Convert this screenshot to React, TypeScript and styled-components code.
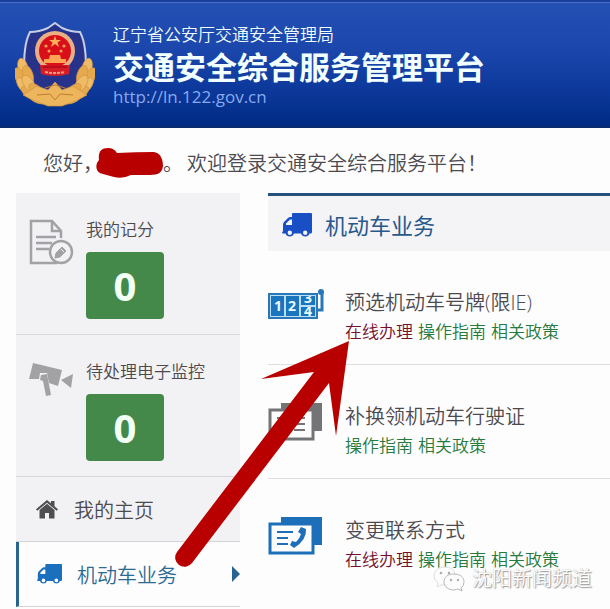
import React from "react";
import styled, { createGlobalStyle } from "styled-components";

const cjk = '"Noto Sans CJK SC", sans-serif';

const GlobalStyle = createGlobalStyle`
  *, *::before, *::after { box-sizing: border-box; }
  body {
    margin: 0;
    background: #fdfdfe;
    color: #4c4a4e;
    font-family: "Open Sans", ${cjk};
    font-size: 20px;
    font-weight: 350;
  }
  a { color: inherit; text-decoration: none; }
  h1, h2, h3, p, ul { margin: 0; padding: 0; font-weight: inherit; }
  ul { list-style: none; }
  svg { display: block; flex: none; }
`;

const Page = styled.div`
  position: relative;
  overflow: hidden;
`;

const Header = styled.header`
  display: flex;
  align-items: center;
  gap: 18px;
  height: 128px;
  padding: 0 15px;
  border-top: 2px solid #1a3f9f;
  background: linear-gradient(#2450b4 0%, #1c47ac 35%, #0d389b 70%, #002c84 97%, #0b2c6c 100%);
  box-shadow: inset 0 1px #4a70c4;
`;

const Brand = styled.div`
  display: flex;
  flex-direction: column;
  color: #f2ffff;
  white-space: nowrap;
`;

const Bureau = styled.p`
  font-size: 17px;
  line-height: 24px;
`;

const Title = styled.h1`
  font-size: 31px;
  line-height: 40px;
  font-weight: 700;
`;

const SiteLink = styled.a`
  color: #86aaf0;
  font-family: "Open Sans", sans-serif;
  font-size: 17px;
  font-weight: 400;
  line-height: 20px;
`;

const Greeting = styled.p`
  display: flex;
  align-items: center;
  height: 65px;
  padding: 6px 0 0 43px;
  line-height: 30px;
  white-space: nowrap;
`;

const Redaction = styled.svg`
  margin: 0 0 0 -7px;
`;

const Welcome = styled.span`
  margin-left: 4px;
`;

const Columns = styled.div`
  display: flex;
  align-items: flex-start;
  gap: 28px;
  padding-left: 16px;
`;

const Sidebar = styled.aside`
  flex: 0 0 224px;
  background: #f2f1f4;
`;

const Stat = styled.section`
  display: flex;
  gap: 12px;
  height: 142px;
  padding: 24px 14px 0 12px;
  border-bottom: 1px solid #d8d7da;
`;

const StatIcon = styled.div`
  padding-top: 2px;
`;

const StatLabel = styled.h2`
  font-size: 17px;
  line-height: 25px;
`;

const StatValue = styled.div`
  display: flex;
  align-items: center;
  justify-content: center;
  width: 78px;
  height: 67px;
  margin-top: 10px;
  border-radius: 4px;
  background: #45894a;
  color: #f2fff4;
  font-size: 40px;
  font-weight: 700;
`;

const NavItem = styled.a<{ $active?: boolean }>`
  display: flex;
  align-items: center;
  gap: ${(p) => (p.$active ? 15 : 16)}px;
  height: 65px;
  padding-left: ${(p) => (p.$active ? 18 : 20)}px;
  border-bottom: 1px solid #d3d3d6;
  border-left: ${(p) => (p.$active ? "3px solid #28648f" : "0")};
  background: ${(p) => (p.$active ? "#fdfdfe" : "transparent")};
  color: ${(p) => (p.$active ? "#2c6a90" : "#4c4a4e")};
`;

const NavLabel = styled.span`
  padding-top: 4px;
  line-height: 30px;
`;

const NavCaret = styled.svg`
  margin-left: auto;
`;

const Main = styled.main`
  flex: 1;
  min-width: 0;
`;

const PanelHead = styled.header`
  display: flex;
  align-items: center;
  gap: 13px;
  height: 58px;
  padding: 2px 14px 0;
  border-top: 3px solid #28507c;
  background: #f4f3f6;
  color: #28588c;
`;

const PanelTitle = styled.h2`
  font-size: 22px;
  line-height: 34px;
  font-weight: 400;
`;

const Service = styled.li`
  display: flex;
  gap: 20px;
  height: 114px;
  padding-top: 37px;
  border-bottom: 1px solid #dedee2;
  &:last-child { border-bottom: 0; }
`;

const ServiceIcon = styled.div`
  flex: 0 0 57px;
`;

const ServiceTitle = styled.h3`
  font-size: 20px;
  line-height: 30px;
  white-space: nowrap;
`;

const Actions = styled.div`
  display: flex;
  gap: 5px;
  font-size: 17px;
  line-height: 28px;
  white-space: nowrap;
`;

const Action = styled.a<{ $primary?: boolean }>`
  color: ${(p) => (p.$primary ? "#74102c" : "#267a3c")};
`;

const Arrow = styled.svg`
  position: absolute;
  left: 168px;
  top: 336px;
  pointer-events: none;
`;

const Watermark = styled.div`
  position: absolute;
  right: 18px;
  top: 565px;
  display: flex;
  align-items: center;
  gap: 7px;
  color: #fff;
  line-height: 28px;
  text-shadow: 1px 1px 1px #999, 0 0 1px #aaa;
  pointer-events: none;
`;

const Emblem = () => {
  const leaves = [
    [8, 46, -14], [5, 55, -26], [9, 64, -40], [15, 71, -56], [23, 76, -68],
    [13, 53, -18], [14, 62, -34], [22, 69, -50],
  ];
  const wreath = leaves.map(([x, y, r], i) => (
    <ellipse key={i} cx={x} cy={y} rx="5" ry="10" transform={`rotate(${r} ${x} ${y})`} fill={i % 2 ? "#e6a94e" : "#f0bb66"} stroke="#d09440" strokeWidth="0.6" />
  ));
  return (
    <svg width="80" height="86" viewBox="0 0 80 86" role="img" aria-label="警徽">
      <path d="M40 1 47 6Q56 10 65 10Q69 18 70 28C74 55 62 71 40 80C18 71 6 55 10 28Q11 18 15 10Q24 10 33 6Z" fill="#27328b" stroke="#c6cee4" strokeWidth="2" />
      {wreath}
      <g transform="translate(80 0) scale(-1 1)">{wreath}</g>
      <path d="M8 73 22 64 33 68 40 60 47 68 58 64 72 73 60 79 47 84H33L20 79Z" fill="#edb55c" stroke="#d09440" strokeWidth="0.7" />
      <path d="M30 66 40 63 50 66M22 73 35 72 40 78 45 72 58 73" fill="none" stroke="#bd7f35" />
      <circle cx="40" cy="29" r="20" fill="#e8b084" />
      <path d="M25 43H55L54 52Q40 56 26 52Z" fill="#d51d25" />
      <circle cx="40" cy="29" r="16" fill="#d9101a" />
      <path d="M40 14 41.500 18H46L42.500 20.500 44 25 40 22 36 25 37.500 20.500 34 18H38.500Z" fill="#ffb05b" />
      <g fill="#ffa455">
        <circle cx="31" cy="24" r="1.600" /><circle cx="49" cy="24" r="1.600" />
        <circle cx="34" cy="29" r="1.500" /><circle cx="46" cy="29" r="1.500" />
        <path d="M35 33H45L46 37H51V41H29V37H34Z" />
      </g>
      <path d="M28 45H52" stroke="#b80d1d" strokeWidth="2" />
      <path d="M30 50Q40 52 50 50" fill="none" stroke="#f29a80" strokeWidth="2" strokeDasharray="3 1" />
    </svg>
  );
};

const Truck = ({ width, color }: { width: number; color: string }) => (
  <svg width={width} height={Math.round(width * 0.8)} viewBox="0 0 30 24" aria-hidden="true">
    <path fillRule="evenodd" fill={color} d="M11 0H29Q30 0 30 1V19Q30 20.500 28.500 20.500H27.500A4.500 4.500 0 0 1 19 20.500H12A4.500 4.500 0 0 1 3.500 20.500H1Q0 20.500 0 19.500Q1 19 1 17V12Q1 10 2 9L6 5Q7 4 8.500 4H10V1Q10 0 11 0ZM10 6.500H8.500Q8 6.500 7.500 7L4 10.500V12H10ZM7.800 17.500A2.200 2.200 0 1 0 7.800 21.900A2.200 2.200 0 1 0 7.800 17.500ZM23.200 17.500A2.200 2.200 0 1 0 23.200 21.900A2.200 2.200 0 1 0 23.200 17.500Z" />
  </svg>
);

const Home = () => (
  <svg width="22" height="19" viewBox="0 0 22 19" fill="#4f4f52" aria-hidden="true">
    <path d="M11 0 15 3.300V1H18.500V6.300L22 9.300 20.700 10.800 11 2.800 1.300 10.800 0 9.300Z" />
    <path d="M11 3.800 18.500 10V18.500H13V13H9V18.500H3.500V10Z" />
  </svg>
);

const RecordIcon = () => (
  <svg width="46" height="46" viewBox="0 0 46 46" fill="none" stroke="#a2a1a4" strokeWidth="2.500" aria-hidden="true">
    <path d="M33 19V12L24 2H3V44H29" />
    <path d="M24 2V12H33M8 18H28M8 24H24M8 30H21" />
    <circle cx="33" cy="33" r="11" fill="#f2f1f4" />
    <path d="M27 39 28 34 34 28 38 32 32 38Z" fill="#a2a1a4" strokeWidth="1" />
    <path d="M33 30 36 33" stroke="#f2f1f4" strokeWidth="1" />
  </svg>
);

const CameraIcon = () => (
  <svg width="46" height="38" viewBox="0 0 46 38" fill="#a2a1a4" aria-hidden="true">
    <path d="M5 2 34 9 30 25 21 22 19 12H12L11 18 1 18Z" />
    <path d="M13 14 19 13 23 34 18 35 15 20 12 19ZM33 19 45 13 43 27Z" />
  </svg>
);

const PlateIcon = () => (
  <svg width="57" height="34" viewBox="0 0 57 34" aria-hidden="true">
    <rect x="1" y="6" width="48" height="24" fill="#b9e0f8" stroke="#2878b8" strokeWidth="2" />
    <path d="M49 22H54V4" fill="none" stroke="#2878b8" strokeWidth="3" />
    <circle cx="53" cy="4" r="3" fill="#2878b8" />
    <path d="M3 8H16V28H3ZM18 8H31V28H18ZM33 8H47V17H33ZM33 19H47V28H33Z" fill="#1b75be" />
    <g fill="#e9fbff" fontFamily="Open Sans" fontSize="14" fontWeight="700" textAnchor="middle">
      <text x="10" y="23">1</text>
      <text x="24" y="23">2</text>
      <svg x="33" y="8" width="14" height="9"><text x="7" y="7">3</text></svg>
      <svg x="33" y="19" width="14" height="9"><text x="7" y="9">4</text></svg>
    </g>
  </svg>
);

const CardsIcon = ({ color, phone }: { color: string; phone?: boolean }) => (
  <svg width="54" height="40" viewBox="0 0 54 40" aria-hidden="true">
    <path d="M13 1H54V29H13Z" fill={color} />
    <rect x="2" y="8" width="43" height="29" fill="#fdfdfe" stroke={color} strokeWidth="3" />
    {phone ? (
      <>
        <path d="M9 16H25M9 22H20M9 28H20" stroke={color} strokeWidth="2" />
        <path d="M33 11 38 13Q39 24 26 32L22 29 24 25 28 26Q32 22 33 18L30 16Z" fill={color} />
      </>
    ) : (
      <path d="M9 16H20M9 22H20M9 28H20M26 16H37M26 22H37M26 28H37" stroke={color} strokeWidth="2" />
    )}
  </svg>
);

const WeChat = () => (
  <svg width="32" height="26" viewBox="0 0 32 26" fill="#fdfdfe" fillOpacity="0.8" stroke="#b8b8b8" aria-hidden="true">
    <path d="M12 1C5 1 1 5 1 10Q1 14 5 17L4 21 8 19Q14 20 18 17 24 13 22 8 20 1 12 1Z" stroke="#dedede" />
    <path d="M21 8C15 8 11 11 11 16S16 24 21 24L25 23 29 25 28 22Q31 20 31 16C31 11 27 8 21 8Z" />
    <g fill="#999" stroke="none">
      <circle cx="8" cy="7" r="1.300" /><circle cx="16" cy="7" r="1.300" />
      <circle cx="18" cy="14" r="1.200" /><circle cx="25" cy="14" r="1.200" />
    </g>
  </svg>
);

const stats = [
  { label: "我的记分", value: 0, icon: <RecordIcon /> },
  { label: "待处理电子监控", value: 0, icon: <CameraIcon /> },
];

const services = [
  { title: "预选机动车号牌(限IE)", online: true, icon: <PlateIcon /> },
  { title: "补换领机动车行驶证", online: false, icon: <CardsIcon color="#747477" /> },
  { title: "变更联系方式", online: true, icon: <CardsIcon color="#1d6fba" phone /> },
];

export default function App() {
  return (
    <Page>
      <GlobalStyle />
      <Header>
        <Emblem />
        <Brand>
          <Bureau>辽宁省公安厅交通安全管理局</Bureau>
          <Title>交通安全综合服务管理平台</Title>
          <SiteLink href="#home">http://ln.122.gov.cn</SiteLink>
        </Brand>
      </Header>

      <Greeting>
        <span>您好，</span>
        <Redaction width="67" height="32" viewBox="0 0 67 32" aria-hidden="true">
          <path d="M3 12C2 4 5 0 12 0Q18 0 21 5Q40 4 58 4C65 5 67 12 67 18C66 27 59 27 51 27L35 27Q27 31 18 29L7 26C-1 25-1 16 3 12Z" fill="#b90000" />
        </Redaction>
        <span>。</span>
        <Welcome>欢迎登录交通安全综合服务平台！</Welcome>
      </Greeting>

      <Columns>
        <Sidebar>
          {stats.map((s) => (
            <Stat key={s.label}>
              <StatIcon>{s.icon}</StatIcon>
              <div>
                <StatLabel>{s.label}</StatLabel>
                <StatValue>{s.value}</StatValue>
              </div>
            </Stat>
          ))}
          <nav>
            <NavItem href="#mine">
              <Home />
              <NavLabel>我的主页</NavLabel>
            </NavItem>
            <NavItem href="#vehicle" $active aria-current="page">
              <Truck width={25} color="#1b70bd" />
              <NavLabel>机动车业务</NavLabel>
              <NavCaret width="8" height="16" viewBox="0 0 8 16" aria-hidden="true">
                <path d="M0 0 8 8 0 16Z" fill="#28648f" />
              </NavCaret>
            </NavItem>
          </nav>
        </Sidebar>

        <Main>
          <PanelHead>
            <Truck width={30} color="#194fc4" />
            <PanelTitle>机动车业务</PanelTitle>
          </PanelHead>
          <ul>
            {services.map((s) => (
              <Service key={s.title}>
                <ServiceIcon>{s.icon}</ServiceIcon>
                <div>
                  <ServiceTitle>{s.title}</ServiceTitle>
                  <Actions>
                    {s.online && <Action href="#online" $primary>在线办理</Action>}
                    <Action href="#guide">操作指南</Action>
                    <Action href="#policy">相关政策</Action>
                  </Actions>
                </div>
              </Service>
            ))}
          </ul>
        </Main>
      </Columns>

      <Arrow width="188" height="236" viewBox="168 336 188 236" aria-hidden="true">
        <path d="M349 341 261 379 314 372 177 552A9 9 0 0 0 192 563L329 383 336 436Z" fill="#b90000" />
      </Arrow>

      <Watermark>
        <WeChat />
        沈阳新闻频道
      </Watermark>
    </Page>
  );
}
